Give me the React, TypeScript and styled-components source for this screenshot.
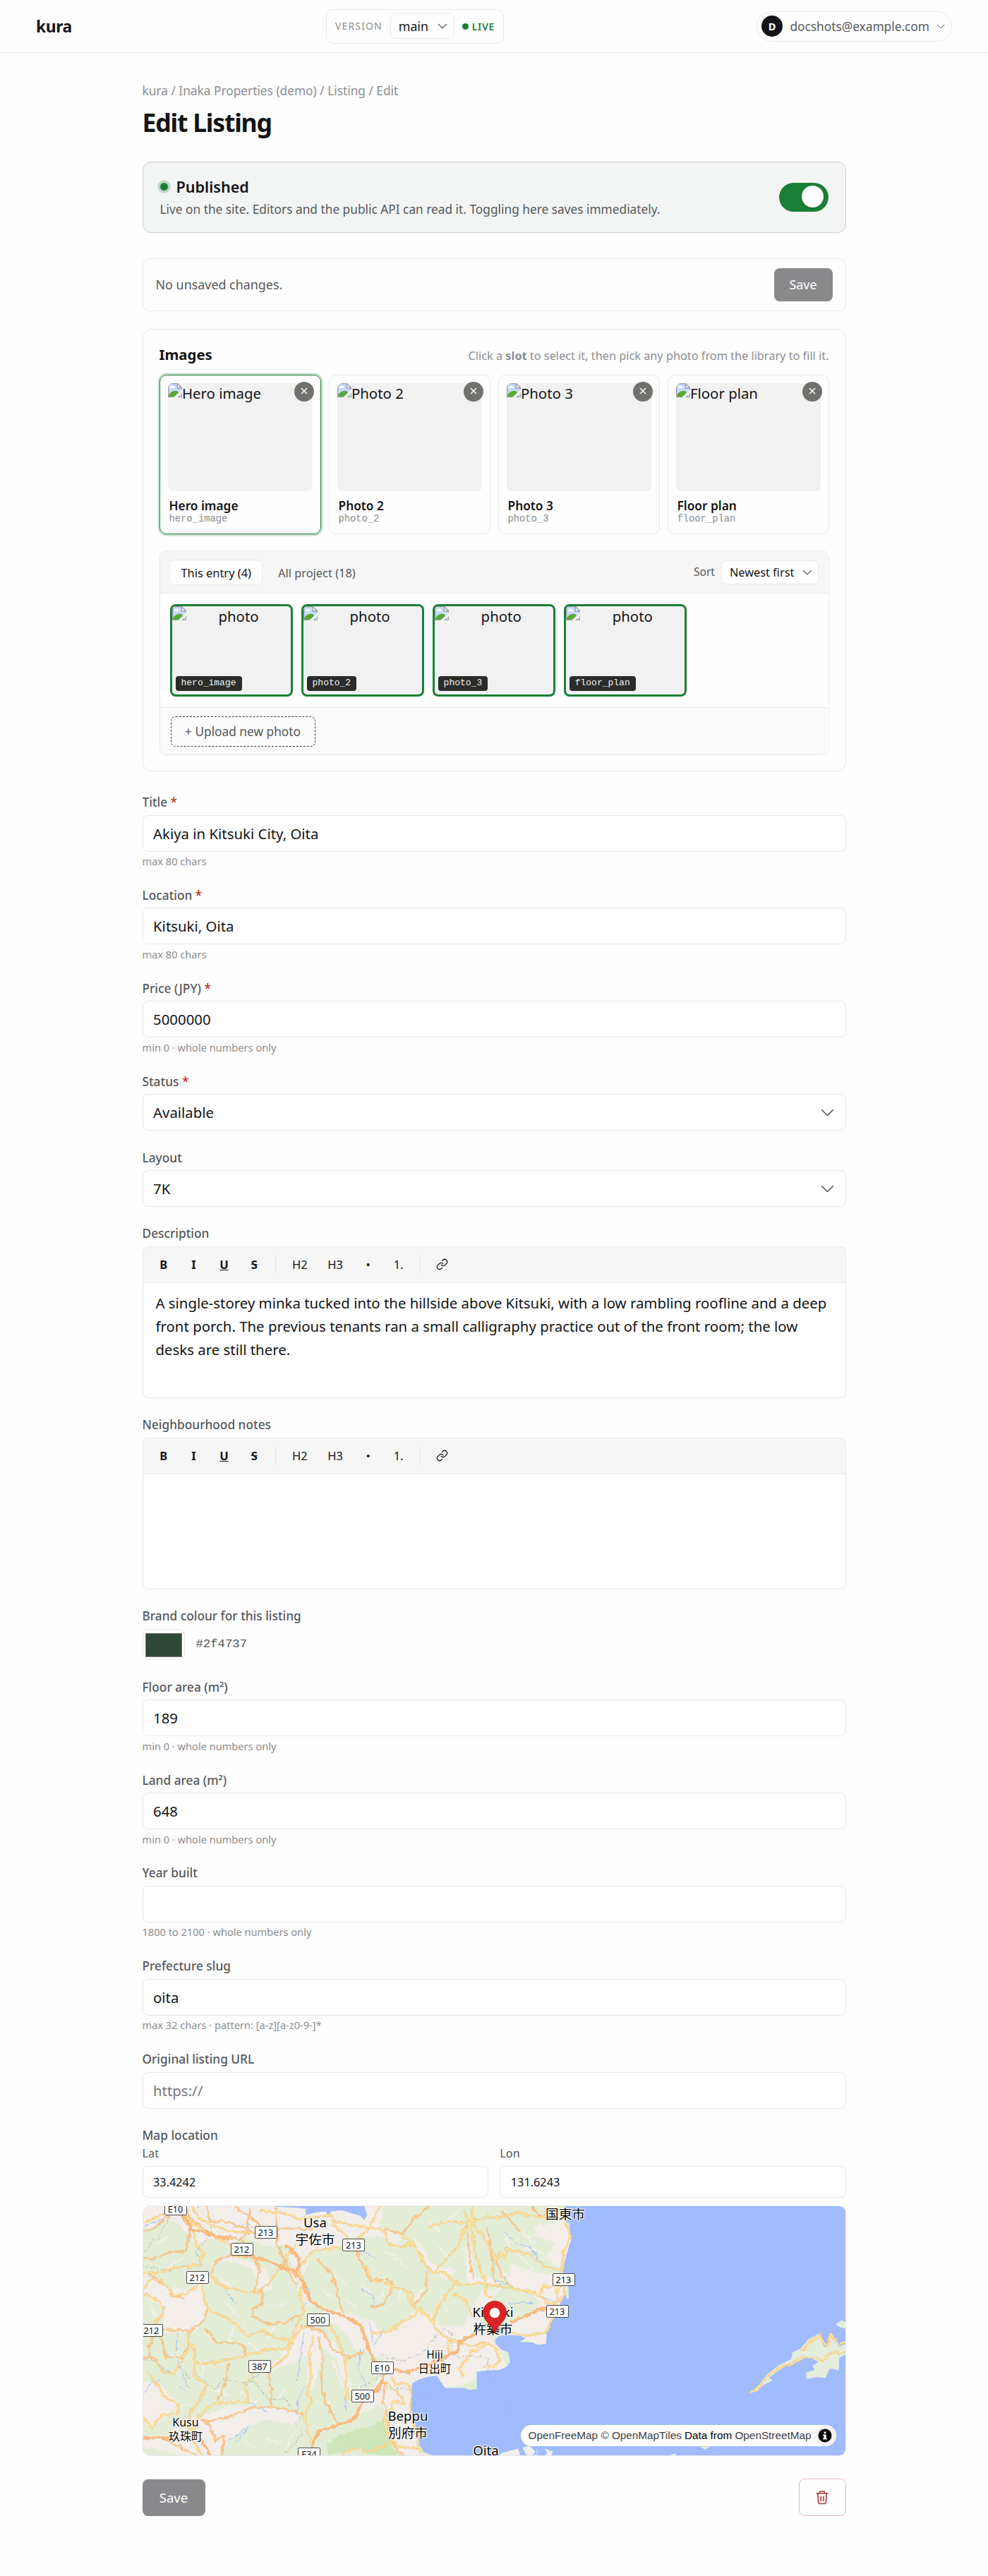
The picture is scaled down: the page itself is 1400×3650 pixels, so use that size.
import { useState } from "react";
import styled, { createGlobalStyle, css } from "styled-components";

const slots = [
  { label: "Hero image", name: "hero_image" },
  { label: "Photo 2", name: "photo_2" },
  { label: "Photo 3", name: "photo_3" },
  { label: "Floor plan", name: "floor_plan" },
];

type MapPoint = { x: number; y: number };

const shields: (MapPoint & { text: string })[] = [
  { x: 46, y: 4, text: "E10" },
  { x: 174, y: 37, text: "213" },
  { x: 140, y: 61, text: "212" },
  { x: 77, y: 101, text: "212" },
  { x: 12, y: 175.5, text: "212" },
  { x: 248, y: 161, text: "500" },
  { x: 298.5, y: 55, text: "213" },
  { x: 165.5, y: 226.5, text: "387" },
  { x: 339, y: 229, text: "E10" },
  { x: 311, y: 268.5, text: "500" },
  { x: 235.5, y: 351, text: "E34" },
  { x: 596, y: 104, text: "213" },
  { x: 587, y: 149, text: "213" },
];

const towns: (MapPoint & { en?: string; ja?: string; size: number })[] = [
  { x: 244, y: 35, en: "Usa", ja: "宇佐市", size: 18.6 },
  { x: 598.5, y: 11, ja: "国東市", size: 18.6 },
  { x: 496, y: 162, en: "Kitsuki", ja: "杵築市", size: 18.6 },
  { x: 413.5, y: 221, en: "Hiji", ja: "日出町", size: 15.6 },
  { x: 375.5, y: 309, en: "Beppu", ja: "別府市", size: 18.6 },
  { x: 60.5, y: 316, en: "Kusu", ja: "玖珠町", size: 16 },
  { x: 486, y: 346, en: "Oita", size: 18.6 },
];

const sea = [
  "M555 320L600 328 640 330 690 332 725 336 728 358 770 349 812 345 820 360 836 345 880 341 920 352 960 362 975 377 988 360 975 320Z",
  "M1830 320L1835 385 1850 390 1852 420 1858 450 1848 475 1840 500 1828 540 1822 570 1828 600 1845 625 1847 670 1838 672 1835 652 1815 680 1795 715 1775 740 1755 780 1750 838 1715 842 1690 832 1638 832 1662 818 1640 808 1590 805 1552 808 1535 820 1535 838 1560 860 1590 870 1598 905 1580 925 1550 935 1500 937 1455 942 1455 1006 1425 1010 1400 1002 1320 1002 1300 977 1285 957 1250 960 1210 970 1180 985 1175 1030 1175 1080 1190 1130 1205 1170 1212 1215 1230 1242 1290 1260 3040 1260 3040 320Z",
];

const valleys = [
  "M30 320L30 410 80 400 140 375 200 400 250 470 330 450 400 470 470 440 560 480 640 470 690 560 745 490 850 490 900 440 1000 440 1060 440 1110 470 1150 440 1100 420 1040 405 1060 320Z",
  "M640 470L700 520 760 500 720 570 700 640 760 650 740 700 690 640 670 560Z",
  "M780 700L860 710 960 740 1020 760 1060 800 1120 780 1180 720 1250 720 1310 780 1400 770 1440 690 1480 640 1560 630 1500 700 1440 800 1390 830 1290 880 1200 900 1090 900 1000 880 940 860 900 800 840 760Z",
  "M690 770L780 790 850 840 900 900 920 1010 890 1000 860 900 800 850 760 1010 730 1010 740 870 700 900 600 930 560 960 540 940 620 890Z",
  "M1290 770L1500 790 1600 940 1290 1010 1170 990 1080 960 1060 900 1180 880 1250 850Z",
  "M1060 950L1190 960 1180 1090 1220 1253 1150 1253 1090 1200 1070 1100 1040 1060 940 1110 900 1140 980 1030Z",
  "M280 1110L400 1070 580 1070 700 1100 680 1140 560 1120 470 1150 400 1200 370 1253 200 1253 34 1220 34 1180 140 1180 200 1110Z",
  "M30 570L120 620 200 640 290 610 300 710 260 790 130 800 110 700 30 650Z",
  "M30 980L110 990 180 1060 120 1120 60 1150 30 1120Z",
  "M320 540L420 510 560 560 590 640 530 640 500 560 400 530Z",
  "M1700 400L1830 380 1860 450 1825 560 1740 520 1800 460 1710 440Z",
  "M1600 540L1700 570 1830 590 1830 740 1740 850 1560 800 1600 760 1720 700 1700 650 1590 620Z",
  "M1180 440L1250 560 1330 600 1370 560 1260 540 1220 470Z",
  "M1400 480L1420 610 1530 620 1560 600 1450 590 1430 470Z",
];

// Small strips of open ground that break up the forest
const clearings =
  "M90 470L140 440M130 560L200 520M60 690L90 740M150 870L200 930M360 600L420 640M380 680L440 740M420 780L400 830M560 700L640 690M600 770L560 820M300 900L280 960M340 1010L400 1030M480 830L540 870M440 1010L520 1060M640 1010L610 1040M840 570L900 620M800 640L850 670M960 620L1010 650M1040 680L1060 640M900 680L950 700M1140 620L1120 680M1220 640L1190 680M1300 660L1330 720M1110 520L1160 560M1060 490L1110 510M1290 480L1340 520M1250 380L1300 420M1500 440L1530 520M1570 420L1600 480M1620 500L1700 560M1640 420L1700 460M1560 560L1600 610M1330 380L1380 340M840 900L880 1000M820 1050L850 1100M960 990L930 1050M680 1160L640 1230M560 1190L620 1210M460 1200L520 1230M160 1080L240 1060M60 1010L100 1060M330 830L300 790M1100 830L1160 800M1200 830L1240 780M1390 1050L1400 1060M1650 480L1740 500M1660 440L1760 430M600 430L640 450";

const forest =
  "M815 1215L860 1180 920 1160 980 1150 1030 1130 1060 1120 1070 1180 1090 1215 1130 1253 1090 1260 990 1250 940 1225 880 1240 820 1253Z";

const peninsula = [
  "M2615 1022L2640 1005 2665 990 2685 958 2740 918 2795 895 2800 870 2835 855 2870 820 2915 800 2935 850 2955 845 2960 800 2985 830 3000 850 3040 830 3040 872 3000 890 2998 935 2960 930 2940 965 2900 962 2860 968 2858 945 2895 935 2885 920 2910 905 2880 890 2830 892 2780 915 2730 945 2700 965 2715 975 2680 990 2650 1015Z",
  "M2985 765L3010 750 3040 765 3040 785 3000 775Z",
  "M2405 1222L2450 1218 2430 1232Z",
  "M2250 1260L2305 1245 2300 1260Z",
];

const harbour = [
  "M1545 1260L1560 1245 1632 1228 1642 1260Z",
  "M1650 1225L1680 1217 1705 1240 1690 1253 1716 1250 1710 1220 1712 1260 1670 1260Z",
  "M1745 1228L1780 1240 1770 1260 1740 1260 1755 1245Z",
];

const yellowRoads = [
  "M30 390L90 370 140 345 180 330 220 370 300 420 340 440 430 480",
  "M240 320L270 370 330 400 400 420 510 425",
  "M30 655L80 665 120 700 110 740 80 760 80 790",
  "M30 570L90 575 150 560 270 545 290 500 260 470 240 400 200 340",
  "M285 610L290 660 310 710 360 730 420 760 480 810 540 790 600 815 660 825",
  "M660 825L700 750 720 720 700 660 715 600 690 560 730 520 770 490 880 480",
  "M530 345L620 350 700 375 760 365 830 360",
  "M830 350L840 380 900 395 1000 405 1060 415 1085 470 1130 480 1180 460 1230 540 1260 570 1320 575 1370 620 1450 610 1530 620",
  "M1230 540L1215 500 1160 450 1120 430",
  "M1000 405L1030 350 1045 320",
  "M950 490L900 440 840 390",
  "M1000 405L960 440 930 470",
  "M30 650L60 600 110 600 170 660 220 650 280 610",
  "M320 580L360 620 440 640 520 650 580 600 620 550 660 490 690 470",
  "M220 800L250 860 255 910 330 910 480 880 560 860 640 855 700 790",
  "M560 940L640 890 680 810 720 770",
  "M760 810L740 870 750 960 730 1020 750 1050 720 1110 740 1170 760 1230",
  "M820 760L860 810 890 880 900 960 900 1040 920 1045",
  "M1000 800L1090 790 1130 760 1210 720 1250 740 1290 790 1330 820 1380 830",
  "M1200 710L1240 730 1270 760 1290 700 1340 640 1380 600",
  "M1440 740L1410 680 1370 650 1350 655",
  "M1190 700L1180 650 1090 620 1010 600 970 540",
  "M260 900L250 960 300 990 280 1040 230 1100 230 1170",
  "M540 900L470 990 480 1050 330 1060 270 1110 230 1180",
  "M30 1110L70 1150 120 1100 180 1100 180 1060 130 1040 90 990 50 940",
  "M210 1120L240 1180 280 1253",
  "M1095 960L1110 990 1160 985 1175 1010 1170 1100 1200 1180 1215 1245",
  "M1060 980L1120 1020 1150 1060 1100 1050 1090 1080 1060 1100 1070 1170 1120 1220 1210 1230",
  "M880 1245L950 1225 980 1240 1060 1220 1090 1200",
  "M1380 830L1430 850 1500 830 1535 860 1555 900 1530 920 1480 920",
  "M1340 880L1330 830 1380 830M1400 960L1380 930 1430 870 1500 840",
  "M1430 390L1400 420 1380 470 1290 560 1260 575",
  "M1250 400L1340 385 1420 385 1500 365 1560 370 1620 350 1680 360 1740 370 1760 330",
  "M1420 385L1400 340M1440 380L1430 320",
  "M1435 390L1510 470 1540 530 1550 500 1575 520 1580 485 1680 505 1740 550 1820 567 1825 490 1855 445 1835 385",
  "M1530 620L1610 635 1700 645 1725 660 1760 690 1810 680 1830 640 1825 620 1740 625 1725 660",
  "M1430 390L1450 500 1480 580 1500 620 1490 650 1520 670",
  "M1800 630L1795 690 1780 740 1750 795 1660 808 1590 795",
  "M2620 1020L2660 1000 2690 960 2740 930 2820 905 2840 888 2900 892 2930 900 2965 870 3040 870",
  "M2840 862L2880 830 2915 805 2945 850 2965 805 2990 830 3000 845 3040 832",
  "M100 940L160 950 200 900 230 850",
  "M1240 720L1180 700 1160 650",
];

const orangeRoads = [
  "M30 420L80 410 140 360 200 330",
  "M120 785L230 790 290 750 310 710",
  "M225 340L235 400 220 480 200 500",
  "M230 370L290 410 330 435 430 445 470 460",
  "M300 320L320 380 400 385 510 425 570 425",
  "M430 330L510 380 560 420M490 330L480 410 450 450",
  "M600 330L605 430 600 470 640 530 660 560",
  "M605 410L760 410",
  "M320 575L350 530 400 510 460 510",
  "M500 510L530 560 520 620 500 650M540 640L540 690 500 710 500 740 560 760 640 760 700 730",
  "M770 520L840 580 870 680 880 720",
  "M1000 700L1060 690 1100 620",
  "M30 520L90 520 140 500 220 490",
  "M50 570L130 620 160 660 210 670",
  "M60 890L60 850 80 800",
  "M110 810L130 890 200 890 230 840 230 790",
  "M30 890L80 890 120 940 150 950",
  "M300 780L340 830 460 840 470 880",
  "M400 910L380 990 350 1050",
  "M560 940L580 1000 580 1070",
  "M300 1130L400 1110 510 1075 600 1075 715 1098",
  "M280 1120L320 1140 340 1200 380 1180 370 1253",
  "M30 1190L120 1190 200 1225 260 1253",
  "M620 480L640 560 690 620",
  "M780 810L800 900 790 1000 830 1090 870 1140",
  "M720 770L800 790 840 860 920 890 980 860",
  "M1240 570L1240 640 1190 690",
  "M1410 390L1430 550 1440 600M1500 400L1520 520 1530 610",
  "M1640 420L1560 340M1690 330L1740 370",
  "M1540 530L1560 580 1610 635",
  "M1100 620L1080 600 1000 600 940 490",
  "M1060 980L1060 1060 1080 1120 1080 1190 1140 1253",
  "M1260 320L1180 380 1140 430 1060 410",
];

const highways = [
  "M460 510L540 520 600 545 680 570 720 620 740 670 780 700 830 720 880 730 960 770 980 820 1000 870 1030 920",
  "M690 570L700 520 640 470",
  "M1030 920L1160 945 1240 920 1300 895 1370 870 1380 830 1440 805 1500 760",
  "M1060 950L1040 1000 980 1040 930 1120 850 1145 780 1165 750 1225",
  "M1600 760L1660 735 1720 710 1750 705",
  "M200 360L240 410 300 425 360 440 400 450",
  "M30 1186L100 1190 180 1192 270 1180 320 1253",
];

const railways =
  "M265 330L320 380 325 430 280 470 260 500 290 545 200 548 150 565 30 550M150 350L100 440 60 470 40 500M30 895L90 900 150 950 190 920 230 965 260 950 340 1010 380 970 460 985 500 975 570 1045 640 1045 670 1085 715 1100 680 1130 720 1170 630 1253M960 1000L1040 960 1060 950M1050 880L1130 905 1230 870 1310 780 1350 800 1350 870 1380 890 1420 880 1500 890 1505 940M1010 1020L1080 1000 1170 1010";

const rivers =
  "M40 400L130 370 145 350M410 410L470 390 500 400M720 790L700 900 690 980M720 1000L690 1050 690 1100M180 800L170 880 200 950 230 1010M430 1200L480 1150 390 1200M730 690L745 650 730 620M1000 760L1010 830M960 860L950 930 990 1000M1020 700L1010 660 960 635M1060 780L1020 840M1565 420L1620 460 1680 480 1740 545M470 1000L540 930M30 1030L60 990 110 970M960 490L1020 520M1530 600L1600 620M1590 690L1650 680 1700 690M1735 665L1790 680M380 640L430 690M470 1050L570 1095M190 1000L230 1030M900 1100L890 1030";

function Chevron({ size = 12 }: { size?: number }) {
  return (
    <ChevronSvg width={size} viewBox="0 0 14 8">
      <path d="M1 1l6 6 6-6" />
    </ChevronSvg>
  );
}

function BrokenImage() {
  return (
    <BrokenSvg viewBox="0 0 16 16">
      <path d="M.5.5h10l5 5v10H.5z" fill="#c8dafc" />
      <path
        d="M2 5.2c0-1 .8-1.6 1.6-1.5C4 2.6 5.6 2.4 6.3 3.5c1 0 1.5.7 1.4 1.7z"
        fill="#fff"
      />
      <path d="M1 15v-2.5c2-2.8 5.5-4.2 8-4 2 .3 4 2.3 4 6.5z" fill="#58a835" />
      <path d="M.5 15.5V.5h10l5 5v10z" fill="none" stroke="#9b9ea3" />
      <path d="M10.5.5v5h5z" fill="#f6f6f6" stroke="#9b9ea3" />
      <path d="M16 6.5v4L10.5 16H6z" fill="#f1f1f1" />
    </BrokenSvg>
  );
}

function LinkIcon() {
  return (
    <StrokeSvg width="17" height="17" viewBox="0 0 24 24">
      <path d="M10 13a5 5 0 0 0 7.54.54l3-3a5 5 0 0 0-7.07-7.07l-1.72 1.71" />
      <path d="M14 11a5 5 0 0 0-7.54-.54l-3 3a5 5 0 0 0 7.07 7.07l1.71-1.71" />
    </StrokeSvg>
  );
}

function TrashIcon() {
  return (
    <StrokeSvg width="20" height="22" viewBox="0 0 20 22">
      <path d="M2 5h16M6.5 5V3.2c0-.7.5-1.2 1.2-1.2h4.6c.7 0 1.2.5 1.2 1.2V5" />
      <path d="M3.8 5l.9 13c.1.9.7 1.5 1.5 1.5h7.6c.8 0 1.4-.6 1.5-1.5l.9-13" />
      <path d="M8.2 9.5v6M11.8 9.5v6" />
    </StrokeSvg>
  );
}

function Field({
  label,
  required,
  value = "",
  placeholder,
  hint,
  select,
}: {
  label: string;
  required?: boolean;
  value?: string;
  placeholder?: string;
  hint?: string;
  select?: boolean;
}) {
  return (
    <FieldWrap>
      <Label>
        {label} {required && <Required>*</Required>}
      </Label>
      {select ? (
        <SelectBox>
          {value}
          <Chevron size={19} />
        </SelectBox>
      ) : (
        <Input defaultValue={value} placeholder={placeholder} />
      )}
      {hint && <Hint>{hint}</Hint>}
    </FieldWrap>
  );
}

function Editor({ label, text }: { label: string; text?: string }) {
  return (
    <FieldWrap>
      <Label>{label}</Label>
      <EditorBox>
        <Toolbar>
          <Tool $bold>B</Tool>
          <Tool $bold>I</Tool>
          <Tool $bold $line="underline">
            U
          </Tool>
          <Tool $bold $line="line-through">
            S
          </Tool>
          <Divider />
          <Tool>H2</Tool>
          <Tool>H3</Tool>
          <Tool>•</Tool>
          <Tool>1.</Tool>
          <Divider />
          <Tool>
            <LinkIcon />
          </Tool>
        </Toolbar>
        <EditorText>{text}</EditorText>
      </EditorBox>
    </FieldWrap>
  );
}

function LocationMap() {
  return (
    <MapBox>
      <MapSvg viewBox="34 326 2992 927" preserveAspectRatio="none">
        <filter id="wiggle" x="0" y="0" width="100%" height="100%">
          <feTurbulence type="fractalNoise" baseFrequency="0.045" numOctaves="2" seed="4" />
          <feDisplacementMap in="SourceGraphic" scale="22" xChannelSelector="R" yChannelSelector="G" />
        </filter>
        <rect x="0" y="300" width="3060" height="1000" fill="#e3edd6" />
        <g filter="url(#wiggle)">
          {valleys.map((d) => (
            <path key={d} d={d} fill="#f3eeea" />
          ))}
          <path d={clearings} fill="none" stroke="#f1efe6" strokeWidth="9" />
          <path d={forest} fill="#cfe6bb" />
        </g>
        {sea.map((d) => (
          <path key={d} d={d} fill="#a0bcff" />
        ))}
        {peninsula.map((d) => (
          <path key={d} d={d} fill="#e4eddb" />
        ))}
        {harbour.map((d) => (
          <path key={d} d={d} fill="#f1efee" />
        ))}
        <path
          d="M1175 1024L1245 1026 1290 1090 1370 1140 1440 1150 1530 1125 1604 1078 1540 1000 1505 940"
          fill="none"
          stroke="#a8b2c4"
          strokeWidth="2"
          strokeDasharray="8 4"
        />
        <MapLines>
          <path d={rivers} stroke="#a0bcf5" strokeWidth="1" />
          <path d={railways} stroke="#b1b3ac" strokeWidth="1.4" strokeDasharray="1.5 2" />
          <path d={orangeRoads.join("")} stroke="#eab27a" strokeWidth="2.6" />
          <path d={orangeRoads.join("")} stroke="#fdcf93" strokeWidth="1.5" />
          <path d={yellowRoads.join("")} stroke="#ecb877" strokeWidth="3" />
          <path d={yellowRoads.join("")} stroke="#fee399" strokeWidth="2" />
          <path d={highways.join("")} stroke="#eda365" strokeWidth="4" />
          <path d={highways.join("")} stroke="#fdbf80" strokeWidth="2.8" />
        </MapLines>
      </MapSvg>
      {shields.map(({ x, y, text }) => (
        <Shield key={`${x}-${y}`} $x={x} $y={y}>
          {text}
        </Shield>
      ))}
      {towns.map(({ x, y, en, ja, size }) => (
        <Town key={`${x}-${y}`} $x={x} $y={y} $size={size}>
          {en && <span>{en}</span>}
          {ja && <span>{ja}</span>}
        </Town>
      ))}
      <Marker viewBox="0 0 34 46">
        <ellipse cx="18" cy="41" rx="12" ry="5" fill="#00000022" />
        <path
          d="M17 .5C7.8.5.5 7.7.5 16.8.5 28.5 12 33 17 45.5 22 33 33.5 28.5 33.5 16.8 33.5 7.7 26.2.5 17 .5z"
          fill="#dc2323"
          stroke="#b41c1c"
          strokeWidth=".8"
        />
        <circle cx="17" cy="17.2" r="7.2" fill="#fff" />
      </Marker>
      <Attribution>
        <span>
          OpenFreeMap © OpenMapTiles <b>Data from</b> OpenStreetMap
        </span>
        <InfoButton>
          <svg width="20" height="20" viewBox="0 0 20 20">
            <circle cx="10" cy="10" r="9.5" />
            <path
              d="M10 4.2a1.6 1.6 0 1 0 0 3.2 1.6 1.6 0 0 0 0-3.2M7 8.5v1.4h1.2v4.2H7v1.4h6v-1.4h-1.2V8.5z"
              fill="#fff"
            />
          </svg>
        </InfoButton>
      </Attribution>
    </MapBox>
  );
}

export default function App() {
  const [published, setPublished] = useState<boolean>(true);
  const [activeSlot, setActiveSlot] = useState<string>("hero_image");

  return (
    <>
      <GlobalStyle />
      <Header>
        <Brand>kura</Brand>
        <VersionBox>
          <VersionLabel>VERSION</VersionLabel>
          <VersionSelect>
            main
            <Chevron size={14} />
          </VersionSelect>
          <Live>LIVE</Live>
        </VersionBox>
        <Account>
          <Avatar>D</Avatar>
          docshots@example.com
          <Chevron size={12} />
        </Account>
      </Header>

      <Main>
        <Breadcrumb>kura / Inaka Properties (demo) / Listing / Edit</Breadcrumb>
        <PageTitle>Edit Listing</PageTitle>

        <PublishCard>
          <div>
            <PublishTitle>Published</PublishTitle>
            <PublishNote>
              Live on the site. Editors and the public API can read it. Toggling
              here saves immediately.
            </PublishNote>
          </div>
          <Toggle $on={published} onClick={() => setPublished(!published)} />
        </PublishCard>

        <SaveBar>
          No unsaved changes.
          <SaveButton>Save</SaveButton>
        </SaveBar>

        <ImagesCard>
          <ImagesHead>
            <h2>Images</h2>
            <p>
              Click a <b>slot</b> to select it, then pick any photo from the
              library to fill it.
            </p>
          </ImagesHead>
          <SlotGrid>
            {slots.map(({ label, name }) => (
              <Slot
                key={name}
                $active={name === activeSlot}
                onClick={() => setActiveSlot(name)}>
                <SlotImage>
                  <BrokenImage />
                  {label}
                </SlotImage>
                <SlotLabel>{label}</SlotLabel>
                <SlotName>{name}</SlotName>
                <ClearSlot>
                  <svg width="10" height="10" viewBox="0 0 10 10">
                    <path d="M1 1l8 8M9 1l-8 8" stroke="#fff" strokeWidth="1.5" />
                  </svg>
                </ClearSlot>
              </Slot>
            ))}
          </SlotGrid>

          <Library>
            <LibraryBar>
              <Tab $active>This entry (4)</Tab>
              <Tab>All project (18)</Tab>
              <SortLabel>Sort</SortLabel>
              <SortSelect>
                Newest first
                <Chevron size={14} />
              </SortSelect>
            </LibraryBar>
            <PhotoGrid>
              {slots.map(({ name }) => (
                <Photo key={name}>
                  <BrokenImage />
                  <span>photo</span>
                  <PhotoTag>{name}</PhotoTag>
                </Photo>
              ))}
            </PhotoGrid>
            <LibraryFoot>
              <UploadButton>+ Upload new photo</UploadButton>
            </LibraryFoot>
          </Library>
        </ImagesCard>

        <Form>
          <Field label="Title" required value="Akiya in Kitsuki City, Oita" hint="max 80 chars" />
          <Field label="Location" required value="Kitsuki, Oita" hint="max 80 chars" />
          <Field label="Price (JPY)" required value="5000000" hint="min 0 · whole numbers only" />
          <Field label="Status" required value="Available" select />
          <Field label="Layout" value="7K" select />
          <Editor
            label="Description"
            text="A single-storey minka tucked into the hillside above Kitsuki, with a low rambling roofline and a deep front porch. The previous tenants ran a small calligraphy practice out of the front room; the low desks are still there."
          />
          <Editor label="Neighbourhood notes" />
          <FieldWrap>
            <Label>Brand colour for this listing</Label>
            <ColourRow>
              <Swatch />
              #2f4737
            </ColourRow>
          </FieldWrap>
          <Field label="Floor area (m²)" value="189" hint="min 0 · whole numbers only" />
          <Field label="Land area (m²)" value="648" hint="min 0 · whole numbers only" />
          <Field label="Year built" hint="1800 to 2100 · whole numbers only" />
          <Field label="Prefecture slug" value="oita" hint="max 32 chars · pattern: [a-z][a-z0-9-]*" />
          <Field label="Original listing URL" placeholder="https://" />
          <div>
            <MapTitle>Map location</MapTitle>
            <Coords>
              <CoordLabel>
                Lat
                <CoordInput defaultValue="33.4242" />
              </CoordLabel>
              <CoordLabel>
                Lon
                <CoordInput defaultValue="131.6243" />
              </CoordLabel>
            </Coords>
            <LocationMap />
          </div>
        </Form>

        <Actions>
          <SaveButton $large>Save</SaveButton>
          <DeleteButton>
            <TrashIcon />
          </DeleteButton>
        </Actions>
      </Main>
    </>
  );
}

// Styled Components

const border = "#e9e9eb";
const ink = "#131416";
const muted = "#55575b";
const faint = "#8b8c90";
const green = "#1a7f37";
const mono = `"Liberation Mono", monospace`;

const GlobalStyle = createGlobalStyle`
  * {
    box-sizing: border-box;
    margin: 0;
  }
  body {
    background-color: #fefefe;
    color: ${ink};
    font-family: "Noto Sans", "Noto Sans CJK JP", sans-serif;
    font-size: 20.4px;
  }
  button, input {
    font-family: inherit;
  }
`;

const ChevronSvg = styled.svg`
  flex: none;
  fill: none;
  stroke: #55575b;
  stroke-width: 1.1;
`;

const StrokeSvg = styled.svg`
  fill: none;
  stroke: currentColor;
  stroke-width: 1.7;
  stroke-linecap: round;
  stroke-linejoin: round;
`;

const BrokenSvg = styled.svg`
  width: 20.4px;
  height: 20.4px;
  flex: none;
`;

const Header = styled.header`
  height: 75px;
  border-bottom: 1px solid #e6e7e8;
  padding: 0 51px;
  display: grid;
  grid-template-columns: 411px 1fr auto;
  align-items: center;
`;

const Brand = styled.strong`
  font-size: 22.9px;
  letter-spacing: -0.02em;
`;

const VersionBox = styled.div`
  width: 252px;
  height: 49px;
  border: 1px solid ${border};
  border-radius: 10px;
  padding: 0 12px;
  display: flex;
  align-items: center;
  gap: 11px;
`;

const VersionLabel = styled.span`
  font-size: 14px;
  letter-spacing: 0.08em;
  color: ${faint};
  padding-bottom: 2px;
`;

const VersionSelect = styled.div`
  width: 91px;
  height: 36px;
  border: 1px solid ${border};
  border-radius: 7px;
  padding: 0 9px 0 11px;
  display: flex;
  align-items: center;
  justify-content: space-between;
  font-size: 17.8px;
`;

const Live = styled.span`
  font-size: 14px;
  font-weight: 600;
  letter-spacing: 0.05em;
  color: ${green};
  display: flex;
  align-items: center;
  gap: 5px;

  &::before {
    content: "";
    width: 9px;
    height: 9px;
    border-radius: 50%;
    background-color: ${green};
  }
`;

const Account = styled.div`
  height: 43px;
  border: 1px solid ${border};
  border-radius: 22px;
  padding: 0 9px 0 6px;
  display: flex;
  align-items: center;
  gap: 10px;
  font-size: 17.3px;
  color: ${muted};
`;

const Avatar = styled.span`
  width: 30.5px;
  height: 30.5px;
  border-radius: 50%;
  background-color: #131417;
  color: white;
  font-size: 14.6px;
  font-weight: 700;
  display: grid;
  place-items: center;
`;

const Main = styled.main`
  width: 997px;
  margin: 0 auto;
  padding: 42px 0 82px;
`;

const Breadcrumb = styled.p`
  font-size: 17.3px;
  line-height: 24px;
  color: ${faint};
`;

const PageTitle = styled.h1`
  font-size: 35.6px;
  line-height: 44px;
  letter-spacing: -0.034em;
  margin-top: 10px;
`;

const PublishCard = styled.section`
  height: 101px;
  margin-top: 34px;
  border: 1px solid #c9cdcb;
  border-radius: 12px;
  background-color: #f3f5f4;
  padding: 0 24px;
  display: flex;
  align-items: center;
  justify-content: space-between;
`;

const PublishTitle = styled.h2`
  font-size: 21.6px;
  line-height: 30px;
  font-weight: 600;
  display: flex;
  align-items: center;
  gap: 12px;

  &::before {
    content: "";
    width: 11px;
    height: 11px;
    border-radius: 50%;
    background-color: ${green};
    box-shadow: 0 0 0 3.8px #c0dac7;
  }
`;

const PublishNote = styled.p`
  font-size: 17.3px;
  line-height: 27px;
  margin-top: 3px;
  color: ${muted};
`;

const Toggle = styled.button<{ $on: boolean }>`
  width: 70px;
  height: 41px;
  border: none;
  border-radius: 21px;
  padding: 4px 7px 6px;
  background-color: ${({ $on }) => ($on ? green : "#c4c6c8")};
  display: flex;
  justify-content: ${({ $on }) => ($on ? "flex-end" : "flex-start")};
  cursor: pointer;

  &::before {
    content: "";
    width: 31px;
    height: 31px;
    border-radius: 50%;
    background-color: white;
    box-shadow: 0 1px 3px #0000004d;
  }
`;

const SaveBar = styled.section`
  height: 75px;
  margin-top: 35.5px;
  border: 1px solid ${border};
  border-radius: 10px;
  padding: 0 18px;
  display: flex;
  align-items: center;
  justify-content: space-between;
  font-size: 17.9px;
  color: ${muted};
`;

const SaveButton = styled.button<{ $large?: boolean }>`
  width: ${({ $large }) => ($large ? "89px" : "83px")};
  height: ${({ $large }) => ($large ? "52px" : "47px")};
  border: none;
  border-radius: 8px;
  background-color: #89898b;
  color: white;
  font-size: ${({ $large }) => ($large ? "18.6px" : "17.9px")};
`;

const ImagesCard = styled.section`
  height: 627px;
  margin-top: 25.5px;
  border: 1px solid ${border};
  border-radius: 13px;
  padding: 22px 23px;
`;

const ImagesHead = styled.div`
  display: flex;
  align-items: baseline;
  justify-content: space-between;
  height: 42px;

  h2 {
    font-size: 20.4px;
    line-height: 27px;
  }

  p {
    font-size: 16.3px;
    color: ${faint};
  }
`;

const SlotGrid = styled.div`
  display: grid;
  grid-template-columns: repeat(4, 1fr);
  gap: 11px;
`;

const Slot = styled.div<{ $active: boolean }>`
  position: relative;
  height: 226px;
  border: 1px solid ${border};
  border-radius: 10px;
  padding: 11px;
  cursor: pointer;
  ${({ $active }) =>
    $active &&
    css`
      border-color: ${green};
      box-shadow: 0 0 0 2.5px #c6dfce;
    `}
`;

const SlotImage = styled.div`
  height: 153px;
  border-radius: 7px;
  background-color: #f1f1f1;
  overflow: hidden;
  display: flex;
  line-height: 28px;
`;

const SlotLabel = styled.p`
  font-size: 17.3px;
  font-weight: 600;
  line-height: 22px;
  margin: 10px 2px 0;
`;

const SlotName = styled.p`
  font-family: ${mono};
  font-size: 13.8px;
  line-height: 16px;
  margin: 0 2px;
  color: ${faint};
`;

const ClearSlot = styled.span`
  position: absolute;
  top: 9px;
  right: 9px;
  width: 28px;
  height: 28px;
  border-radius: 50%;
  background-color: #70706d;
  display: grid;
  place-items: center;
  padding-bottom: 3px;
`;

const Library = styled.div`
  height: 290px;
  margin-top: 23px;
  border: 1px solid ${border};
  border-radius: 10px;
  overflow: hidden;
`;

const LibraryBar = styled.div`
  height: 60px;
  padding: 0 13.5px;
  background-color: #f6f6f6;
  border-bottom: 1px solid ${border};
  display: flex;
  align-items: center;
`;

const Tab = styled.span<{ $active?: boolean }>`
  height: 36px;
  border: 1px solid ${({ $active }) => ($active ? border : "transparent")};
  border-radius: 7px;
  background-color: ${({ $active }) => ($active ? "white" : "transparent")};
  color: ${({ $active }) => ($active ? ink : muted)};
  padding: 0 15.5px;
  margin-right: 5px;
  font-size: 16.4px;
  line-height: 35px;
`;

const SortLabel = styled.span`
  margin-left: auto;
  margin-right: 9px;
  font-size: 15.6px;
  color: ${muted};
  padding-bottom: 2px;
`;

const SortSelect = styled.div`
  width: 138px;
  height: 34px;
  border: 1px solid ${border};
  border-radius: 7px;
  background-color: white;
  padding: 0 8px 0 11px;
  display: flex;
  align-items: center;
  justify-content: space-between;
  font-size: 16.3px;
`;

const PhotoGrid = styled.div`
  height: 161px;
  padding: 15px 14px 14px;
  display: grid;
  grid-template-columns: repeat(5, 1fr);
  align-items: start;
  gap: 11.3px;
`;

const Photo = styled.div`
  position: relative;
  height: 131px;
  border: 3px solid ${green};
  border-radius: 8px;
  background-color: #f1f1f1;
  overflow: hidden;
  display: flex;
  line-height: 28px;

  > span:first-of-type {
    flex: 1;
    text-align: center;
  }
`;

const PhotoTag = styled.span`
  position: absolute;
  left: 5px;
  bottom: 5px;
  height: 21px;
  border-radius: 4px;
  background-color: #2b2b29;
  color: #f3f3f1;
  padding: 0 8px;
  font-family: ${mono};
  font-size: 13px;
  line-height: 19px;
`;

const LibraryFoot = styled.div`
  height: 70px;
  border-top: 1px solid ${border};
  background-color: #fafafa;
  padding: 12px 15px;
`;

const UploadButton = styled.button`
  width: 205px;
  height: 43px;
  border: 1px dashed #3c3d40;
  border-radius: 7px;
  background-color: #fcfcfd;
  color: ${muted};
  font-size: 17.3px;
`;

const Form = styled.div`
  margin-top: 33px;
  display: grid;
  gap: 27.4px;
`;

const FieldWrap = styled.div`
  display: flex;
  flex-direction: column;
`;

const Label = styled.label`
  height: 28.5px;
  line-height: 22px;
  font-size: 17.3px;
  font-weight: 500;
  color: ${muted};
`;

const Required = styled.span`
  color: #bb2d20;
`;

const control = css`
  height: 52px;
  width: 100%;
  border: 1px solid ${border};
  border-radius: 8px;
  background-color: white;
  padding: 0 16px 0 14.5px;
  color: ${ink};
  font-size: 20.4px;
`;

const Input = styled.input`
  ${control}

  &::placeholder {
    color: #757575;
  }
`;

const SelectBox = styled.div`
  ${control}
  display: flex;
  align-items: center;
  justify-content: space-between;
`;

const Hint = styled.p`
  margin-top: 4.5px;
  font-size: 14.6px;
  line-height: 19.5px;
  color: ${faint};
`;

const EditorBox = styled.div`
  height: 215px;
  border: 1px solid ${border};
  border-radius: 8px;
  background-color: white;
  overflow: hidden;
`;

const Toolbar = styled.div`
  height: 51px;
  padding: 0 9px;
  background-color: #f6f6f6;
  border-bottom: 1px solid ${border};
  display: flex;
  align-items: center;
  gap: 2.6px;
`;

const Tool = styled.span<{ $bold?: boolean; $line?: string }>`
  min-width: 40.3px;
  padding: 0 13px;
  font-size: 16.5px;
  font-weight: ${({ $bold }) => ($bold ? 700 : 400)};
  text-decoration: ${({ $line }) => $line ?? "none"};
  text-align: center;
  line-height: 30px;

  svg {
    display: block;
  }
`;

const Divider = styled.span`
  width: 1px;
  height: 25px;
  margin: 0 7.2px;
  background-color: #e6e6e8;
`;

const EditorText = styled.p`
  padding: 12.5px 18px;
  line-height: 33px;
`;

const ColourRow = styled.div`
  height: 44.5px;
  display: flex;
  align-items: center;
  gap: 16px;
  font-family: ${mono};
  font-size: 17.3px;
  color: ${muted};
`;

const Swatch = styled.span`
  width: 60px;
  height: 44.5px;
  border: 1px solid ${border};
  border-radius: 8px;
  padding: 5px 3px;

  &::before {
    content: "";
    display: block;
    height: 100%;
    border: 1px solid #777;
    background-color: #2f4737;
  }
`;

const MapTitle = styled.p`
  height: 25px;
  font-size: 17.3px;
  font-weight: 500;
  line-height: 22px;
  color: ${muted};
`;

const Coords = styled.div`
  display: grid;
  grid-template-columns: 1fr 1fr;
  gap: 16.5px;
`;

const CoordLabel = styled.label`
  font-size: 16.3px;
  line-height: 22px;
  color: ${muted};
`;

const CoordInput = styled.input`
  ${control}
  height: 45px;
  margin-top: 7px;
  font-size: 16.3px;
`;

const MapBox = styled.div`
  position: relative;
  height: 355px;
  margin-top: 11px;
  border: 1px solid #e8e8ec;
  border-radius: 10px;
  overflow: hidden;
`;

const MapSvg = styled.svg`
  display: block;
  width: 100%;
  height: 100%;
`;

const MapLines = styled.g`
  fill: none;
  stroke-linejoin: round;
  filter: url(#wiggle);

  path {
    vector-effect: non-scaling-stroke;
  }
`;

const Shield = styled.span<{ $x: number; $y: number }>`
  position: absolute;
  left: ${({ $x }) => $x}px;
  top: ${({ $y }) => $y}px;
  transform: translate(-50%, -50%);
  width: 32px;
  height: 18px;
  border: 1px solid #4a4a4a;
  border-radius: 2px;
  background-color: white;
  font-size: 12.7px;
  line-height: 16px;
  text-align: center;
`;

const Town = styled.div<{ $x: number; $y: number; $size: number }>`
  position: absolute;
  left: ${({ $x }) => $x}px;
  top: ${({ $y }) => $y}px;
  transform: translate(-50%, -50%);
  display: grid;
  justify-items: center;
  white-space: nowrap;
  font-size: ${({ $size }) => $size}px;
  line-height: 1.27;
  color: black;
  text-shadow: 0 0 1px white, 1px 1px 1px white, -1px -1px 1px white,
    1px -1px 1px white, -1px 1px 1px white;
`;

const Marker = styled.svg`
  position: absolute;
  left: 481.5px;
  top: 134px;
  width: 34px;
  height: 46px;
`;

const Attribution = styled.div`
  position: absolute;
  right: 13px;
  bottom: 13px;
  width: 447px;
  height: 30.5px;
  border-radius: 16px;
  background-color: white;
  padding-left: 11px;
  display: flex;
  align-items: center;
  justify-content: space-between;
  font-family: "Liberation Sans", sans-serif;
  font-size: 15.3px;
  color: #404040;

  b {
    font-weight: 400;
    color: black;
  }
`;

const InfoButton = styled.span`
  width: 30.5px;
  height: 30.5px;
  border-radius: 50%;
  background-color: #f2f2f2;
  display: grid;
  place-items: center;
`;

const Actions = styled.div`
  margin-top: 32px;
  display: flex;
  align-items: center;
  justify-content: space-between;
`;

const DeleteButton = styled.button`
  width: 67px;
  height: 53px;
  border: 1px solid #e3b7b7;
  border-radius: 8px;
  background-color: #fefefe;
  color: #b23a36;
  display: grid;
  place-items: center;
`;
